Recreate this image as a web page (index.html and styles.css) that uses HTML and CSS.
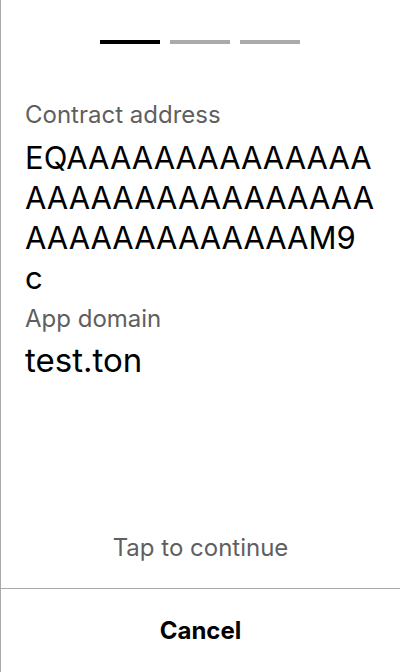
FILE: index.html
```html
<!DOCTYPE html>
<html>
<head>
<meta charset="utf-8">
<link rel="stylesheet" href="styles.css">
</head>
<body>
<div class="screen">
  <div class="steps">
    <span class="step active"></span>
    <span class="step"></span>
    <span class="step"></span>
  </div>
  <div class="content">
    <div class="field">
      <div class="label">Contract address</div>
      <div class="value address">EQAAAAAAAAAAAAAAAAAAAAAAAAAAAAAAAAAAAAAAAAAAAM9<br>c</div>
    </div>
    <div class="field">
      <div class="label">App domain</div>
      <div class="value domain">test.ton</div>
    </div>
  </div>
  <div class="spacer"></div>
  <div class="hint">Tap to continue</div>
  <div class="footer">
    <button class="cancel">Cancel</button>
  </div>
</div>
</body>
</html>
```
FILE: styles.css
```css
html, body {
  margin: 0;
  padding: 0;
  background: #fff;
}
body {
  font-family: Inter, "Noto Sans", sans-serif;
}
.screen {
  height: 672px;
  box-sizing: border-box;
  border-left: 1px solid #aaaaaa;
  display: flex;
  flex-direction: column;
}
.steps {
  display: flex;
  justify-content: center;
  gap: 10px;
  padding-top: 40px;
  padding-right: 1px;
}
.step {
  width: 60px;
  height: 4px;
  background: #aaaaaa;
}
.step.active {
  background: #000;
}
.content {
  padding: 57px 18px 0 24px;
  display: flex;
  flex-direction: column;
  gap: 7px;
}
.field {
  display: flex;
  flex-direction: column;
  gap: 9px;
}
.field + .field {
  gap: 7px;
}
.label {
  font-size: 24px;
  line-height: 28px;
  color: #5f5f5f;
}
.value {
  line-height: 40px;
  color: #000;
  word-break: break-all;
}
.address {
  font-size: 31px;
}
.domain {
  font-size: 33px;
}
.spacer {
  flex: 1;
}
.hint {
  text-align: center;
  font-size: 24px;
  line-height: 28px;
  color: #5f5f5f;
  padding-bottom: 26px;
}
.footer {
  border-top: 1px solid #aaaaaa;
  height: 83px;
  display: flex;
  align-items: center;
  justify-content: center;
}
.cancel {
  border: none;
  background: none;
  font-family: inherit;
  font-size: 24px;
  font-weight: 700;
  color: #000;
  padding: 0;
}
```
